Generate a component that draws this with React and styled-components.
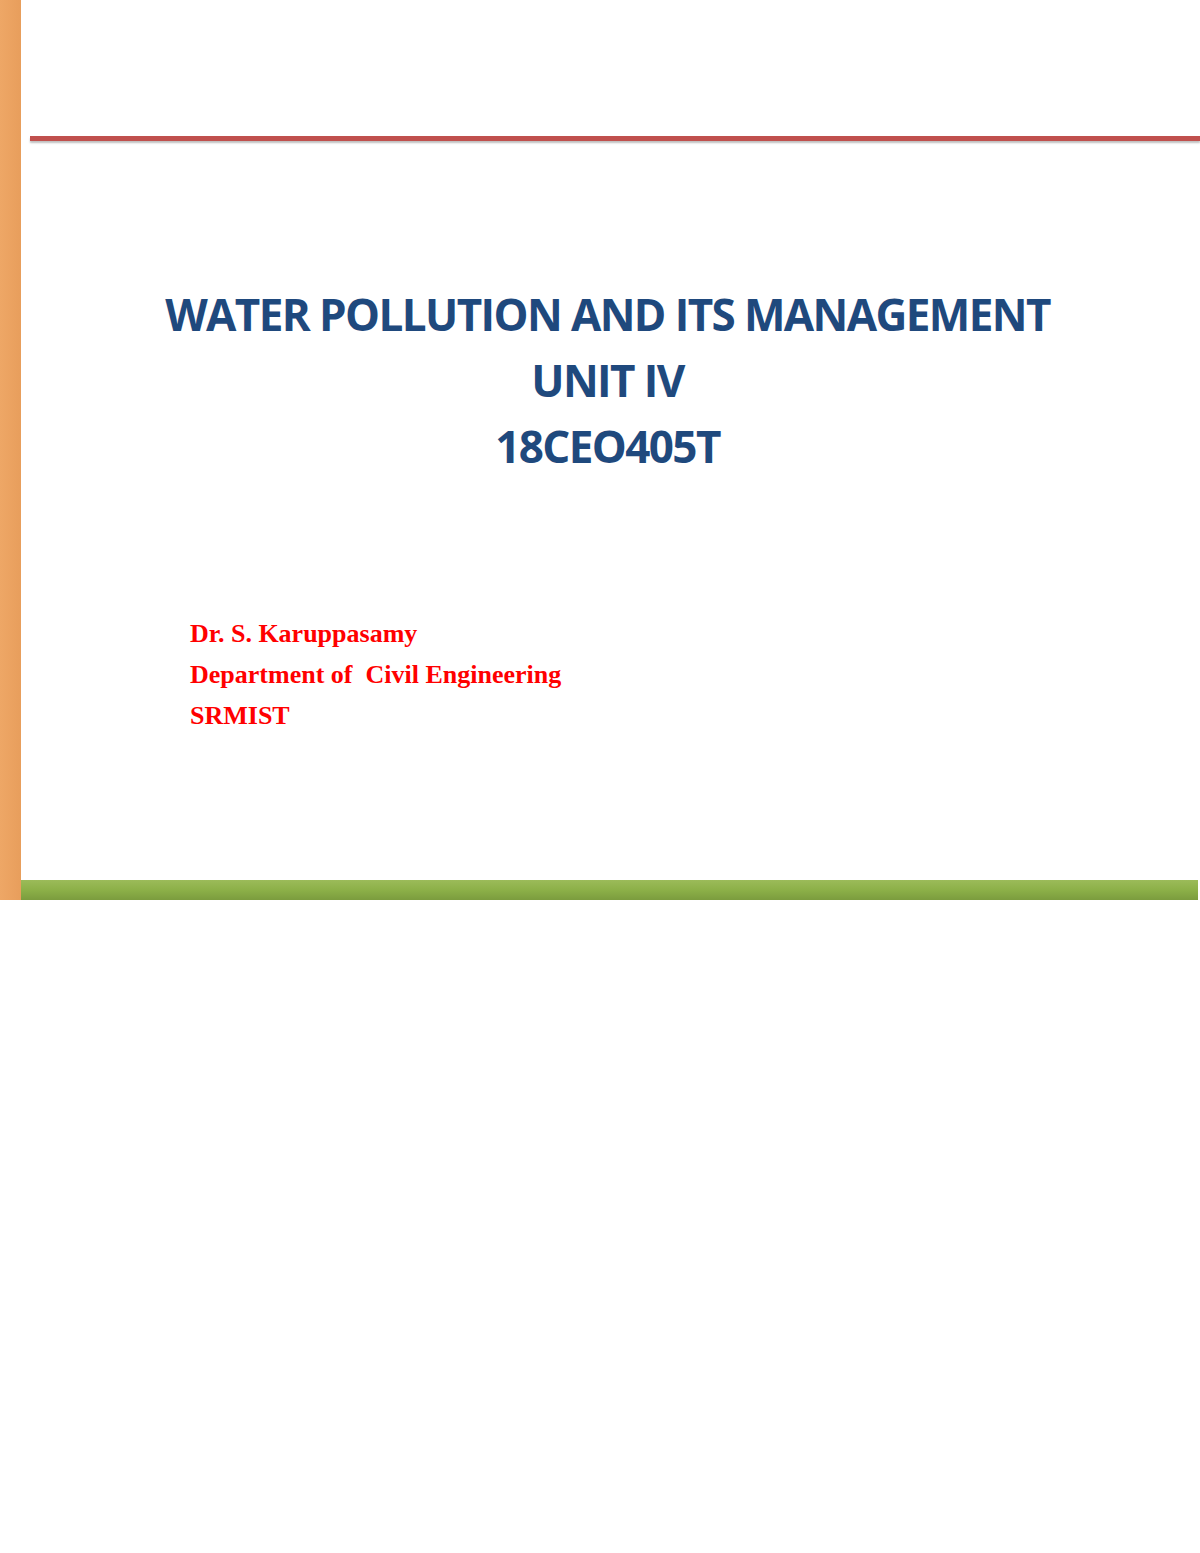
import React from "react";
import styled, { createGlobalStyle } from "styled-components";

const Global = createGlobalStyle`
  html, body { margin: 0; padding: 0; background: #fff; }
`;

const Page = styled.div`
  width: 1200px;
  height: 1553px;
  background: #fff;
  position: relative;
`;

const Slide = styled.div`
  height: 900px;
  display: flex;
`;

const SideBar = styled.div`
  width: 21px;
  flex: none;
  background: linear-gradient(90deg, #eea766, #e89e5c);
  position: relative;
  z-index: 1;
`;

const Main = styled.div`
  flex: 1;
  display: flex;
  flex-direction: column;
  padding-top: 136px;
`;

const RedRule = styled.div`
  margin-left: 9px;
  height: 5px;
  background: #c0504d;
  box-shadow: 0 2px 2px rgba(0,0,0,0.25);
`;

const Title = styled.h1`
  margin: 140px 0 0;
  text-align: center;
  padding-right: 6px;
  font-family: "Open Sans", sans-serif;
  font-weight: 700;
  font-size: 44px;
  line-height: 66px;
  letter-spacing: -1.6px;
  color: #1f497d;
`;

const Author = styled.div`
  margin: 134px 0 0 169px;
  font-family: "Liberation Serif", serif;
  font-weight: 700;
  font-size: 26px;
  line-height: 41px;
  color: #ff0000;
  flex: 1;
`;

const GreenBar = styled.div`
  height: 20px;
  margin-left: -4px;
  margin-right: 2px;
  background: linear-gradient(180deg, #9bbb59, #8cb048 50%, #7b9c3e);
`;

export default function App() {
  return (
    <Page>
      <Global />
      <Slide>
        <SideBar />
        <Main>
          <RedRule />
          <Title>
            WATER POLLUTION AND ITS MANAGEMENT<br />UNIT IV<br />18CEO405T
          </Title>
          <Author>
            Dr. S. Karuppasamy<br />Department of&nbsp; Civil Engineering<br />SRMIST
          </Author>
          <GreenBar />
        </Main>
      </Slide>
    </Page>
  );
}
